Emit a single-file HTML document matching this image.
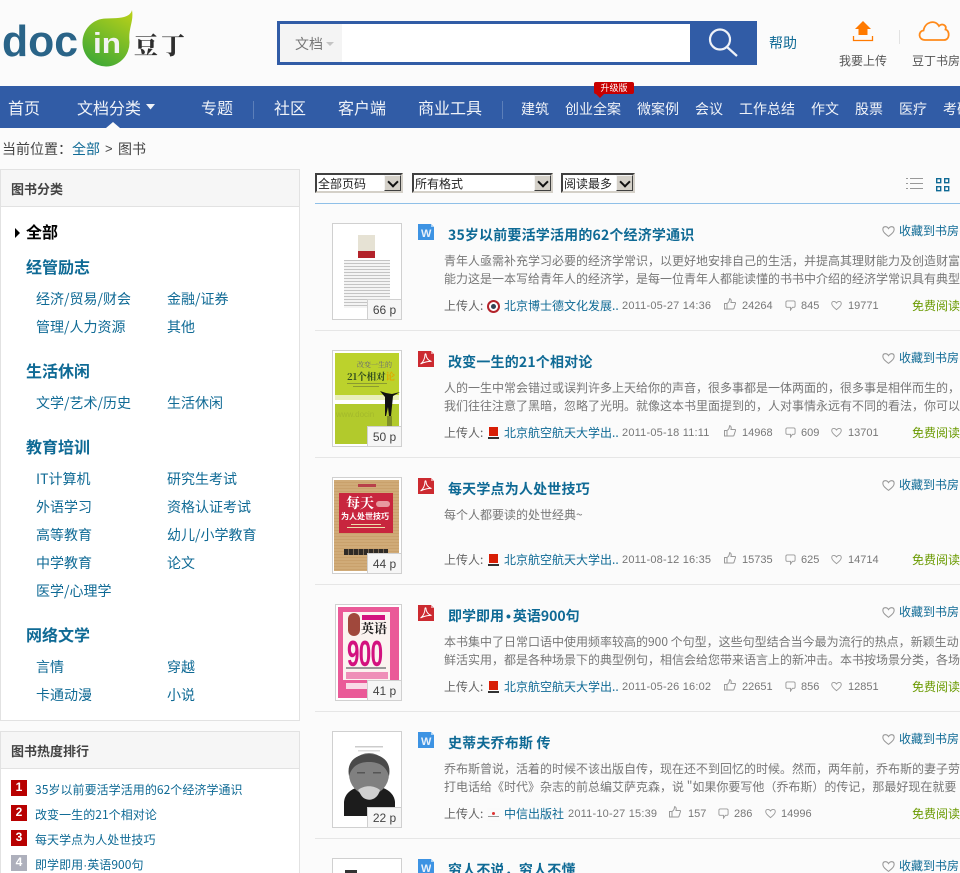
<!DOCTYPE html>
<html lang="zh">
<head>
<meta charset="utf-8">
<title>图书</title>
<style>
html,body{margin:0;padding:0;width:960px;height:873px;overflow:hidden;background:#fbfbfb}
body{position:relative;font-family:"Liberation Sans","Noto Sans CJK SC",sans-serif;font-size:12px;color:#666}
#w{position:absolute;left:0;top:0;width:960px;height:873px;overflow:hidden}
.t,.b{position:absolute;white-space:nowrap}
.t{height:20px;line-height:20px}
a{color:#0f6a95;text-decoration:none}
.n{color:#f0f3f8;font-family:"Noto Sans CJK SC",sans-serif;font-size:14px}
.n.l{font-size:16px}
.s{color:#0f6a95;font-family:"Noto Sans CJK SC",sans-serif;font-size:14px}
.h{color:#0f6a95;font-family:"Noto Sans CJK SC",sans-serif;font-size:16px;font-weight:700}
.pt{color:#444;font-size:13px;font-weight:700;font-family:"Noto Sans CJK SC",sans-serif}
.sel{position:absolute;top:173px;height:20px;box-sizing:border-box;background:#fff;border:2px solid;border-color:#404040 #d4d0c8 #d4d0c8 #404040;font:12px/18px "Noto Sans CJK SC",sans-serif;color:#222;padding-left:1px;overflow:hidden;white-space:nowrap}
.sel i{position:absolute;right:0;top:0;width:17px;height:16px;background:#d4d0c8;border:1px solid;border-color:#f4f4f4 #404040 #404040 #f4f4f4;box-sizing:border-box}
.sel i:after{content:"";position:absolute;left:3.500px;top:1.500px;width:6px;height:6px;border:solid #111;border-width:0 2px 2px 0;transform:rotate(45deg)}
.cv{position:absolute;overflow:hidden}
.th{position:absolute;left:332px;width:70px;height:97px;box-sizing:border-box;border:1px solid #d0d0d0;background:#fff;overflow:hidden}
.pg{position:absolute;left:367px;width:35px;height:21px;box-sizing:border-box;border:1px solid #d0d0d0;background:#f6f6f6;color:#444;font-size:12px;line-height:20px;text-align:center}
.ic{position:absolute;left:418px;width:16px;height:16px}
.ti{color:#0f6a95;font-family:"Noto Sans CJK SC",sans-serif;font-size:14px;font-weight:700;left:448px;letter-spacing:.18px;margin-top:1px}
.d{left:444px;color:#777;font-family:"Noto Sans CJK SC",sans-serif;font-size:12px;width:516px;overflow:hidden;margin-top:1px}
.m{color:#666;font-family:"Noto Sans CJK SC",sans-serif;font-size:12px}
.c{color:#777;font-size:11px}
.dt{letter-spacing:.2px}
.f{color:#6a9a00;font-family:"Noto Sans CJK SC",sans-serif;font-size:12px;left:912px}
.sep{position:absolute;left:315px;width:645px;height:1px;background:#e6e6e6}
.r{position:absolute;left:11px;width:16px;height:16px;background:#b80000;color:#fff;font-size:12px;line-height:15px;text-align:center;font-weight:700}
.rt{left:35px;color:#0f6a95;font-family:"Noto Sans CJK SC",sans-serif;font-size:12px;letter-spacing:.05px;margin-top:1px}
.wl{color:#e8f0fa;font:700 11px/12px 'Liberation Sans',sans-serif;left:421px}
svg{position:absolute;overflow:visible}
</style>
</head>
<body>
<div id="w">

<svg width="0" height="0" style="position:absolute">
<defs>
<symbol id="i-w" viewBox="0 0 16 16"><path d="M0 0H13L16 3V16H0Z" fill="#3d93e3"/><path d="M13 0L16 3H13Z" fill="#a9d2f5"/></symbol>
<symbol id="i-p" viewBox="0 0 16 16"><path d="M0 0H13L16 3V16H0Z" fill="#cc2a30"/><path d="M13 0L16 3H13Z" fill="#eb9a9d"/><path d="M2.500 13C5 11.500 7 7.500 7 3.500C7 2.500 8 2.500 8 3.500C8 6.500 10 9.500 13.500 10.500C11 10.200 6 11 2.500 13Z" fill="none" stroke="#fff" stroke-width="1"/></symbol>
<symbol id="i-t" viewBox="0 0 12 12"><path d="M.5 5.500H3V11H.5ZM3 5.500C5 4.500 5.500 2.500 5.500 .8C7 .5 7.500 2.500 7 4.500H11C11.800 4.500 11.500 6 11 7L10 10.200C9.800 11 9 11 8.500 11H3" fill="none" stroke="#999"/></symbol>
<symbol id="i-c" viewBox="0 0 12 12"><path d="M2.500 1H9.500C10.500 1 11 1.500 11 2.500V6.500C11 7.500 10.500 8 9.500 8H8L6 11V8H2.500C1.500 8 1 7.500 1 6.500V2.500C1 1.500 1.500 1 2.500 1Z" fill="none" stroke="#999"/></symbol>
<symbol id="i-h" viewBox="0 0 12 12"><path d="M6 10.500C2 7.500 .8 6 .8 4C.8 1 4.500 .8 6 3.300C7.500 .8 11.200 1 11.200 4C11.200 6 10 7.500 6 10.500Z" fill="none" stroke="#999"/></symbol>
<linearGradient id="gd" x1="0.800" y1="0" x2="0.300" y2="1"><stop offset="0" stop-color="#b4cf1a"/><stop offset="1" stop-color="#3fa935"/></linearGradient>
</defs>
</svg>

<!-- logo -->
<svg style="left:0;top:0" width="200" height="80">
<text x="2" y="56" font-family="Liberation Sans" font-size="44" font-weight="700" fill="#2a6488" textLength="76" lengthAdjust="spacingAndGlyphs">doc</text>
<path d="M132 10C134 22 128 28 129.500 42A23.500 24 0 1 1 106 18.500C120 18 130 18 132 10Z" fill="url(#gd)"/>
<text x="93" y="53" font-family="Liberation Sans" font-size="29" font-weight="700" fill="#f2f2f2" textLength="28" lengthAdjust="spacingAndGlyphs">in</text>
<text x="134" y="54" font-family="Noto Serif CJK SC" font-size="24" font-weight="900" fill="#2e2e2e" textLength="51">豆丁</text>
</svg>

<!-- search -->
<div class="b" style="left:277px;top:21px;width:480px;height:44px;background:#315ca6"></div>
<div class="b" style="left:280px;top:24px;width:62px;height:38px;background:#f4f4f4"></div>
<div class="b" style="left:342px;top:24px;width:348px;height:38px;background:#fff"></div>
<span class="t" style="left:295px;top:34px;font-size:14px;color:#777;font-family:'Noto Sans CJK SC',sans-serif">文档</span>
<svg style="left:325px;top:41px" width="10" height="6"><path d="M1 1H9L5 5Z" fill="#c4c4c4"/></svg>
<svg style="left:705px;top:26px" width="36" height="34"><circle cx="15" cy="13.500" r="10" fill="none" stroke="#eef2f8" stroke-width="2.200"/><path d="M22 21L32 30" stroke="#eef2f8" stroke-width="2.200"/></svg>
<a class="t" style="left:769px;top:33px;font-family:'Noto Sans CJK SC',sans-serif;font-size:14px">帮助</a>

<!-- upload/cloud -->
<svg style="left:853px;top:20px" width="22" height="22">
<path d="M10 1L18 9H14.500V15H5.500V9H2Z" fill="#ff7a00"/>
<path d="M.5 16V20.500H19.500V16" fill="none" stroke="#ff7a00" stroke-width="1.300"/>
</svg>
<div class="b" style="left:899px;top:30px;width:1px;height:14px;background:#e2e2e2"></div>
<svg style="left:917px;top:19px" width="35" height="23"><path d="M8 21C1 21 1 12 6.500 11.500C8 3 18 0 22 7C25 4 30 6 28.500 10.500C33 11.500 33 21 27 21Z" fill="none" stroke="#ff8a1a" stroke-width="1.800"/></svg>
<span class="t m" style="left:839px;top:51px;color:#555">我要上传</span>
<span class="t m" style="left:912px;top:51px;color:#555">豆丁书房</span>

<!-- nav -->
<div class="b" style="left:0;top:86px;width:960px;height:42px;background:#315ca6"></div>
<span class="t n l" style="left:8px;top:97px">首页</span>
<span class="t n l" style="left:77px;top:97px">文档分类</span>
<svg style="left:145px;top:104px" width="11" height="6"><path d="M1 0H10L5.500 5.500Z" fill="#f0f3f8"/></svg>
<svg style="left:106px;top:122px" width="14" height="6"><path d="M0 6L7 0L14 6Z" fill="#fbfbfb"/></svg>
<span class="t n l" style="left:201px;top:97px">专题</span>
<div class="b" style="left:253px;top:101px;width:1px;height:18px;background:#5c7fb9"></div>
<span class="t n l" style="left:274px;top:97px">社区</span>
<span class="t n l" style="left:338px;top:97px">客户端</span>
<span class="t n l" style="left:418px;top:97px">商业工具</span>
<div class="b" style="left:502px;top:101px;width:1px;height:18px;background:#5c7fb9"></div>
<span class="t n" style="left:521px;top:99px">建筑</span>
<span class="t n" style="left:565px;top:99px">创业全案</span>
<span class="t n" style="left:637px;top:99px">微案例</span>
<span class="t n" style="left:695px;top:99px">会议</span>
<span class="t n" style="left:739px;top:99px">工作总结</span>
<span class="t n" style="left:811px;top:99px">作文</span>
<span class="t n" style="left:855px;top:99px">股票</span>
<span class="t n" style="left:899px;top:99px">医疗</span>
<span class="t n" style="left:943px;top:99px;width:17px;overflow:hidden">考研</span>
<div class="b" style="left:594px;top:82px;width:40px;height:12px;background:#c80000;border-radius:2px;color:#fff;font-size:9px;line-height:12px;text-align:center;font-family:'Noto Sans CJK SC',sans-serif">升级版</div>
<svg style="left:596px;top:94px" width="8" height="4"><path d="M0 0H8L4 4Z" fill="#c80000"/></svg>

<!-- breadcrumb -->
<span class="t" style="left:2px;top:139px;font-size:14px;color:#444;font-family:'Noto Sans CJK SC',sans-serif">当前位置：</span>
<a class="t" style="left:72px;top:139px;font-size:14px;font-family:'Noto Sans CJK SC',sans-serif">全部</a>
<span class="t" style="left:105px;top:139px;font-size:13px;color:#444">&gt;</span>
<span class="t" style="left:118px;top:139px;font-size:14px;color:#444;font-family:'Noto Sans CJK SC',sans-serif">图书</span>

<!-- sidebar -->
<div class="b" style="left:0;top:169px;width:300px;height:552px;box-sizing:border-box;border:1px solid #e2e2e2;background:#fff"></div>
<div class="b" style="left:1px;top:170px;width:298px;height:36px;background:#f6f6f6;border-bottom:1px solid #e2e2e2"></div>
<span class="t pt" style="left:11px;top:179px">图书分类</span>
<svg style="left:15px;top:228px" width="6" height="10"><path d="M0 0L5 5L0 10Z" fill="#000"/></svg>
<span class="t" style="left:26px;top:221px;font-size:16px;font-weight:700;color:#000;font-family:'Noto Sans CJK SC',sans-serif">全部</span>

<span class="t h" style="left:26px;top:256px">经管励志</span>
<span class="t s" style="left:36px;top:289px">经济/贸易/财会</span><span class="t s" style="left:167px;top:289px">金融/证券</span>
<span class="t s" style="left:36px;top:317px">管理/人力资源</span><span class="t s" style="left:167px;top:317px">其他</span>

<span class="t h" style="left:26px;top:360px">生活休闲</span>
<span class="t s" style="left:36px;top:393px">文学/艺术/历史</span><span class="t s" style="left:167px;top:393px">生活休闲</span>

<span class="t h" style="left:26px;top:436px">教育培训</span>
<span class="t s" style="left:36px;top:469px">IT计算机</span><span class="t s" style="left:167px;top:469px">研究生考试</span>
<span class="t s" style="left:36px;top:497px">外语学习</span><span class="t s" style="left:167px;top:497px">资格认证考试</span>
<span class="t s" style="left:36px;top:525px">高等教育</span><span class="t s" style="left:167px;top:525px">幼儿/小学教育</span>
<span class="t s" style="left:36px;top:553px">中学教育</span><span class="t s" style="left:167px;top:553px">论文</span>
<span class="t s" style="left:36px;top:581px">医学/心理学</span>

<span class="t h" style="left:26px;top:624px">网络文学</span>
<span class="t s" style="left:36px;top:657px">言情</span><span class="t s" style="left:167px;top:657px">穿越</span>
<span class="t s" style="left:36px;top:685px">卡通动漫</span><span class="t s" style="left:167px;top:685px">小说</span>

<div class="b" style="left:0;top:731px;width:300px;height:142px;box-sizing:border-box;border:1px solid #e2e2e2;border-bottom:0;background:#fff"></div>
<div class="b" style="left:1px;top:732px;width:298px;height:36px;background:#f6f6f6;border-bottom:1px solid #e2e2e2"></div>
<span class="t pt" style="left:11px;top:741px">图书热度排行</span>
<div class="r" style="top:780px">1</div><span class="t rt" style="top:779px">35岁以前要活学活用的62个经济学通识</span>
<div class="r" style="top:805px">2</div><span class="t rt" style="top:804px">改变一生的21个相对论</span>
<div class="r" style="top:830px">3</div><span class="t rt" style="top:829px">每天学点为人处世技巧</span>
<div class="r" style="top:855px;background:#aeb0bc">4</div><span class="t rt" style="top:854px;height:18px">即学即用<span style="font-family:'Liberation Sans'">·</span>英语900句</span>

<!-- toolbar -->
<div class="sel" style="left:315px;width:88px">全部页码<i></i></div>
<div class="sel" style="left:412px;width:141px">所有格式<i></i></div>
<div class="sel" style="left:561px;width:74px">阅读最多<i></i></div>
<svg style="left:906px;top:178px" width="18" height="12"><path d="M0 .5H2M4 .5H17M0 5.500H2M4 5.500H17M0 10.500H2M4 10.500H17" stroke="#999" fill="none"/></svg>
<svg style="left:936px;top:178px" width="14" height="14"><path d="M.7.7H4.700V4.700H.7ZM8.700.7H12.700V4.700H8.700ZM.7 8.700H4.700V12.700H.7ZM8.700 8.700H12.700V12.700H8.700Z" fill="none" stroke="#0f6a95" stroke-width="1.400"/></svg>
<div class="sep" style="top:203px;background:#8fc0e8"></div>

<!-- row 1 -->
<div class="th" style="top:223px">
 <div class="cv" style="left:25px;top:11px;width:17px;height:16px;background:#e6e2d4"></div>
 <div class="cv" style="left:25px;top:27px;width:17px;height:7px;background:#b3232a"></div>
 <div class="cv" style="left:11px;top:36px;width:46px;height:48px;background:repeating-linear-gradient(#c4c4c4 0 1px,#f4f4f4 1px 3px)"></div>
</div>
<div class="pg" style="top:299px">66 p</div>
<svg class="ic" style="top:224px"><use href="#i-w" width="16" height="16"/></svg>
<span class="b wl" style="top:228px">W</span>
<span class="t ti" style="top:224px">35岁以前要活学活用的62个经济学通识</span>
<svg style="left:882px;top:225px" width="13" height="13"><use href="#i-h" width="13" height="13"/></svg>
<a class="t m" style="left:899px;top:221px;color:#0f6a95">收藏到书房</a>
<span class="t d" style="top:250px">青年人亟需补充学习必要的经济学常识，以更好地安排自己的生活，并提高其理财能力及创造财富</span>
<span class="t d" style="top:268px">能力这是一本写给青年人的经济学，是每一位青年人都能读懂的书书中介绍的经济学常识具有典型</span>
<span class="t m" style="left:444px;top:296px">上传人:</span>
<svg style="left:487px;top:300px" width="13" height="13"><circle cx="6.500" cy="6.500" r="5.500" fill="#fff" stroke="#b3232a" stroke-width="2"/><circle cx="6.500" cy="6.500" r="2.500" fill="#345"/></svg>
<a class="t m" style="left:504px;top:296px;color:#0f6a95">北京博士德文化发展..</a>
<span class="t c dt" style="left:622px;top:296px">2011-05-27 14:36</span>
<svg style="left:724px;top:298px" width="12" height="12"><use href="#i-t" width="12" height="12"/></svg><span class="t c" style="left:742px;top:296px">24264</span>
<svg style="left:785px;top:300px" width="11" height="11"><use href="#i-c" width="11" height="11"/></svg><span class="t c" style="left:801px;top:296px">845</span>
<svg style="left:831px;top:300px" width="11" height="11"><use href="#i-h" width="11" height="11"/></svg><span class="t c" style="left:848px;top:296px">19771</span>
<span class="t f" style="top:296px">免费阅读</span>
<div class="sep" style="top:330px"></div>

<!-- row 2 -->
<div class="th" style="top:350px">
 <div class="cv" style="left:2px;top:2px;width:64px;height:91px;background:#bcd22c"></div>
 <div class="cv" style="left:2px;top:44px;width:64px;height:6px;background:#e9efb8"></div>
 <div class="cv" style="left:2px;top:49px;width:64px;height:4px;background:#fff"></div>
 <div class="cv" style="left:2px;top:53px;width:64px;height:40px;background:#b2ca2c"></div>
 <span class="b" style="left:24px;top:10px;font:7px/9px 'Noto Serif CJK SC',serif;color:#667">改变一生的</span>
 <span class="b" style="left:14px;top:19px;font:700 9.500px/12px 'Noto Serif CJK SC',serif;color:#2f4a20">21个相对<span style="color:#e0a800">论</span></span>
 <div class="cv" style="left:14px;top:32px;width:40px;height:1px;background:#8a9a30"></div>
 <div class="cv" style="left:20px;top:35px;width:26px;height:1px;background:#8a9a30"></div>
 <svg style="left:0;top:0" width="68" height="95"><path d="M47 40L53 42L59 43L67 41L60 45L59 55L58 65H56L55 56L53 65H52L52 46Z" fill="#111"/><rect x="54" y="65" width="5" height="11" fill="#7f8f28"/></svg>
 <span class="b" style="left:3px;top:59px;font:8px/10px 'Liberation Sans',sans-serif;color:#a3b92b">www.docin</span>
</div>
<div class="pg" style="top:426px">50 p</div>
<svg class="ic" style="top:351px"><use href="#i-p" width="16" height="16"/></svg>
<span class="t ti" style="top:351px">改变一生的21个相对论</span>
<svg style="left:882px;top:352px" width="13" height="13"><use href="#i-h" width="13" height="13"/></svg>
<a class="t m" style="left:899px;top:348px;color:#0f6a95">收藏到书房</a>
<span class="t d" style="top:377px">人的一生中常会错过或误判许多上天给你的声音，很多事都是一体两面的，很多事是相伴而生的，</span>
<span class="t d" style="top:395px">我们往往注意了黑暗，忽略了光明。就像这本书里面提到的，人对事情永远有不同的看法，你可以</span>
<span class="t m" style="left:444px;top:423px">上传人:</span>
<svg style="left:488px;top:427px" width="12" height="13"><rect x="1" y="0" width="9" height="9" fill="#d81e06"/><rect x="0" y="10" width="11" height="2" fill="#333"/></svg>
<a class="t m" style="left:504px;top:423px;color:#0f6a95">北京航空航天大学出..</a>
<span class="t c dt" style="left:622px;top:423px">2011-05-18 11:11</span>
<svg style="left:724px;top:425px" width="12" height="12"><use href="#i-t" width="12" height="12"/></svg><span class="t c" style="left:742px;top:423px">14968</span>
<svg style="left:785px;top:427px" width="11" height="11"><use href="#i-c" width="11" height="11"/></svg><span class="t c" style="left:801px;top:423px">609</span>
<svg style="left:831px;top:427px" width="11" height="11"><use href="#i-h" width="11" height="11"/></svg><span class="t c" style="left:848px;top:423px">13701</span>
<span class="t f" style="top:423px">免费阅读</span>
<div class="sep" style="top:457px"></div>

<!-- row 3 -->
<div class="th" style="top:477px">
 <div class="cv" style="left:1px;top:2px;width:65px;height:91px;background:repeating-linear-gradient(#d0ab78 0 2px,#c9a16c 2px 3px)"></div>
 <div class="cv" style="left:25px;top:6px;width:18px;height:3px;background:#b8404a"></div>
 <div class="cv" style="left:6px;top:15px;width:54px;height:40px;background:#c8263e"></div>
 <span class="b" style="left:13px;top:16px;font:700 14px/18px 'Noto Serif CJK SC',serif;color:#fff">每天</span>
 <div class="cv" style="left:43px;top:23px;width:14px;height:6px;border-radius:3px;background:#e79aa0"></div>
 <span class="b" style="left:8px;top:34px;font:700 8px/10px 'Noto Sans CJK SC',sans-serif;color:#fff">为人处世技巧</span>
 <div class="cv" style="left:18px;top:46px;width:30px;height:1px;background:#eda"></div>
 <div class="cv" style="left:14px;top:49px;width:38px;height:1px;background:#eda"></div>
 <div class="cv" style="left:11px;top:71px;width:44px;height:6px;background:repeating-linear-gradient(90deg,#2e2a26 0 4px,#7b6a55 4px 5px)"></div>
</div>
<div class="pg" style="top:553px">44 p</div>
<svg class="ic" style="top:478px"><use href="#i-p" width="16" height="16"/></svg>
<span class="t ti" style="top:478px">每天学点为人处世技巧</span>
<svg style="left:882px;top:479px" width="13" height="13"><use href="#i-h" width="13" height="13"/></svg>
<a class="t m" style="left:899px;top:475px;color:#0f6a95">收藏到书房</a>
<span class="t d" style="top:504px">每个人都要读的处世经典~</span>
<span class="t m" style="left:444px;top:550px">上传人:</span>
<svg style="left:488px;top:554px" width="12" height="13"><rect x="1" y="0" width="9" height="9" fill="#d81e06"/><rect x="0" y="10" width="11" height="2" fill="#333"/></svg>
<a class="t m" style="left:504px;top:550px;color:#0f6a95">北京航空航天大学出..</a>
<span class="t c dt" style="left:622px;top:550px">2011-08-12 16:35</span>
<svg style="left:724px;top:552px" width="12" height="12"><use href="#i-t" width="12" height="12"/></svg><span class="t c" style="left:742px;top:550px">15735</span>
<svg style="left:785px;top:554px" width="11" height="11"><use href="#i-c" width="11" height="11"/></svg><span class="t c" style="left:801px;top:550px">625</span>
<svg style="left:831px;top:554px" width="11" height="11"><use href="#i-h" width="11" height="11"/></svg><span class="t c" style="left:848px;top:550px">14714</span>
<span class="t f" style="top:550px">免费阅读</span>
<div class="sep" style="top:584px"></div>

<!-- row 4 -->
<div class="th" style="top:604px;left:335px;width:67px">
 <div class="cv" style="left:2px;top:2px;width:61px;height:91px;background:#ea5a98"></div>
 <div class="cv" style="left:7px;top:7px;width:47px;height:68px;background:#fbf3f0"></div>
 <div class="cv" style="left:26px;top:10px;width:23px;height:5px;background:#d3127f"></div>
 <span class="b" style="left:25px;top:15px;font:700 13px/16px 'Noto Serif CJK SC',serif;color:#222">英语</span>
 <span class="b" style="left:11px;top:33px;font:700 36px/32px 'Liberation Sans',sans-serif;color:#d3127f;letter-spacing:-1px;transform:scaleX(.62);transform-origin:left">900</span>
 <div class="cv" style="left:12px;top:8px;width:12px;height:23px;background:#a0483c;border-radius:6px"></div>
 <div class="cv" style="left:10px;top:62px;width:40px;height:2px;background:#999"></div>
 <div class="cv" style="left:10px;top:67px;width:42px;height:7px;background:#ef8fb8"></div>
 <div class="cv" style="left:10px;top:78px;width:28px;height:6px;background:#f9d9e6"></div>
</div>
<div class="pg" style="top:680px">41 p</div>
<svg class="ic" style="top:605px"><use href="#i-p" width="16" height="16"/></svg>
<span class="t ti" style="top:605px;letter-spacing:0">即学即用<span style="font-family:'Liberation Sans';margin:0 2px">•</span>英语900句</span>
<svg style="left:882px;top:606px" width="13" height="13"><use href="#i-h" width="13" height="13"/></svg>
<a class="t m" style="left:899px;top:602px;color:#0f6a95">收藏到书房</a>
<span class="t d" style="top:631px">本书集中了日常口语中使用频率较高的900 个句型，这些句型结合当今最为流行的热点，新颖生动</span>
<span class="t d" style="top:649px">鲜活实用，都是各种场景下的典型例句，相信会给您带来语言上的新冲击。本书按场景分类，各场</span>
<span class="t m" style="left:444px;top:677px">上传人:</span>
<svg style="left:488px;top:681px" width="12" height="13"><rect x="1" y="0" width="9" height="9" fill="#d81e06"/><rect x="0" y="10" width="11" height="2" fill="#333"/></svg>
<a class="t m" style="left:504px;top:677px;color:#0f6a95">北京航空航天大学出..</a>
<span class="t c dt" style="left:622px;top:677px">2011-05-26 16:02</span>
<svg style="left:724px;top:679px" width="12" height="12"><use href="#i-t" width="12" height="12"/></svg><span class="t c" style="left:742px;top:677px">22651</span>
<svg style="left:785px;top:681px" width="11" height="11"><use href="#i-c" width="11" height="11"/></svg><span class="t c" style="left:801px;top:677px">856</span>
<svg style="left:831px;top:681px" width="11" height="11"><use href="#i-h" width="11" height="11"/></svg><span class="t c" style="left:848px;top:677px">12851</span>
<span class="t f" style="top:677px">免费阅读</span>
<div class="sep" style="top:711px"></div>

<!-- row 5 -->
<div class="th" style="top:731px">
 <svg style="left:0;top:0" width="68" height="95">
  <path d="M11 70C12 60 20 56 30 54H44C52 56 61 60 62 70V84H11Z" fill="#1c1c1c"/>
  <ellipse cx="36" cy="42" rx="20" ry="21" fill="#808080"/>
  <path d="M16 44C13 28 25 22 36 22C47 22 59 28 56 44C53 34 46 30 36 30C26 30 19 34 16 44Z" fill="#4a4a4a"/>
  <path d="M24 40H32V41.500H24ZM40 40H48V41.500H40Z" fill="#555"/>
  <path d="M25 58C31 53 41 53 47 58C44 70 32 70 28 63Z" fill="#cfcfcf"/>
  <rect x="22" y="14" width="28" height="1.500" fill="#ccc"/>
  <rect x="25" y="18" width="22" height="1.500" fill="#ddd"/>
 </svg>
</div>
<div class="pg" style="top:807px">22 p</div>
<svg class="ic" style="top:732px"><use href="#i-w" width="16" height="16"/></svg>
<span class="b wl" style="top:736px">W</span>
<span class="t ti" style="top:732px">史蒂夫乔布斯 传</span>
<svg style="left:882px;top:733px" width="13" height="13"><use href="#i-h" width="13" height="13"/></svg>
<a class="t m" style="left:899px;top:729px;color:#0f6a95">收藏到书房</a>
<span class="t d" style="top:758px">乔布斯曾说，活着的时候不该出版自传，现在还不到回忆的时候。然而，两年前，乔布斯的妻子劳</span>
<span class="t d" style="top:776px">打电话给《时代》杂志的前总编艾萨克森，说 "如果你要写他（乔布斯）的传记，那最好现在就要</span>
<span class="t m" style="left:444px;top:804px">上传人:</span>
<svg style="left:487px;top:808px" width="13" height="13"><rect width="13" height="13" fill="#fafafa"/><circle cx="6.500" cy="5.500" r="1.500" fill="#d33"/><rect x="1" y="8" width="11" height="1" fill="#999"/></svg>
<a class="t m" style="left:504px;top:804px;color:#0f6a95">中信出版社</a>
<span class="t c dt" style="left:568px;top:804px">2011-10-27 15:39</span>
<svg style="left:669px;top:806px" width="12" height="12"><use href="#i-t" width="12" height="12"/></svg><span class="t c" style="left:688px;top:804px">157</span>
<svg style="left:718px;top:808px" width="11" height="11"><use href="#i-c" width="11" height="11"/></svg><span class="t c" style="left:734px;top:804px">286</span>
<svg style="left:765px;top:808px" width="11" height="11"><use href="#i-h" width="11" height="11"/></svg><span class="t c" style="left:781px;top:804px">14996</span>
<span class="t f" style="top:804px">免费阅读</span>
<div class="sep" style="top:838px"></div>

<!-- row 6 -->
<div class="th" style="top:858px;height:15px;border-bottom:0"><div class="cv" style="left:12px;top:11px;width:12px;height:4px;background:#333"></div></div>
<svg class="ic" style="top:859px;height:14px;overflow:hidden" viewBox="0 0 16 14"><use href="#i-w" width="16" height="16"/></svg>
<span class="b wl" style="top:863px;height:10px;overflow:hidden">W</span>
<span class="t ti" style="top:859px;height:13px;overflow:hidden">穷人不说，穷人不懂</span>
<svg style="left:882px;top:860px" width="13" height="13"><use href="#i-h" width="13" height="13"/></svg>
<a class="t m" style="left:899px;top:856px;height:17px;overflow:hidden;color:#0f6a95">收藏到书房</a>

</div>
</body>
</html>
